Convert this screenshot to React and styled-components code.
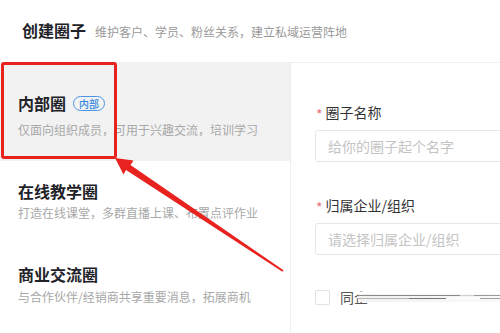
import React from "react";
import styled, { createGlobalStyle } from "styled-components";

const Global = createGlobalStyle`
  html, body { margin: 0; padding: 0; background: #fff; }
  body { font-family: "Noto Sans CJK SC", "Noto Sans", sans-serif; }
  #root { width: 500px; height: 333px; overflow: hidden; }
`;

const Page = styled.div`
  position: relative;
  width: 500px;
  height: 333px;
  overflow: hidden;
  background: #fff;
  display: flex;
  flex-direction: column;
`;

const Header = styled.div`
  height: 62px;
  display: flex;
  align-items: center;
  padding-left: 22px;
  gap: 9px;
  box-sizing: border-box;
  padding-bottom: 2px;
`;

const Title = styled.div`
  font-size: 16px;
  font-weight: 700;
  color: #1f2329;
`;

const Sub = styled.div`
  font-size: 12px;
  color: #9a9a9a;
  padding-top: 2px;
`;

const Body = styled.div`
  flex: 1;
  display: flex;
  border-top: 1px solid #f0f0f0;
`;

const Side = styled.div`
  width: 290px;
  flex-shrink: 0;
  border-right: 1px solid #eeeeee;
  display: flex;
  flex-direction: column;
`;

const Item = styled.div`
  height: ${(p) => p.$h}px;
  box-sizing: border-box;
  padding: ${(p) => p.$pt}px 0 0 18px;
  background: ${(p) => (p.$active ? "#f2f2f2" : "#fff")};
  display: flex;
  flex-direction: column;
  gap: ${(p) => p.$gap}px;
`;

const ItemTitle = styled.div`
  display: flex;
  align-items: center;
  gap: 7px;
  font-size: 16px;
  font-weight: 700;
  color: #1f2329;
  line-height: 20px;
`;

const Badge = styled.span`
  font-size: 10px;
  font-weight: 500;
  color: #2f86e0;
  border: 1px solid #4a95e6;
  border-radius: 8px;
  padding: 0 5px;
  line-height: 13px;
  height: 13px;
`;

const Desc = styled.div`
  font-size: 12px;
  color: #a8a8a8;
  line-height: 16px;
`;

const Main = styled.div`
  flex: 1;
  padding: 39px 0 0 24px;
  display: flex;
  flex-direction: column;
`;

const Label = styled.div`
  font-size: 14px;
  color: #333;
  line-height: 20px;
  display: flex;
  align-items: center;
  gap: 3px;
  margin-left: 1px;
`;

const Star = styled.span`
  color: #e6717d;
  font-size: 14px;
  line-height: 12px;
  padding-top: 4px;
`;

const Input = styled.div`
  margin-top: 8px;
  width: 240px;
  height: 32px;
  box-sizing: border-box;
  border: 1px solid #e6e6e6;
  border-radius: 3px;
  padding-left: 12px;
  display: flex;
  align-items: center;
  font-size: 14px;
  color: #c4c4c4;
  margin-bottom: ${(p) => p.$mb}px;
`;

const CheckRow = styled.div`
  display: flex;
  align-items: center;
  gap: 10px;
`;

const Box = styled.div`
  width: 15px;
  height: 15px;
  box-sizing: border-box;
  border: 1px solid #e2e2e2;
  border-radius: 2px;
`;

const CheckText = styled.span`
  font-size: 14px;
  color: #555;
  line-height: 20px;
`;

const Smudge = styled.span`
  display: block;
  margin-left: -20px;
  width: 170px;
  height: 10px;
  background:
    linear-gradient(#fff, #fff) 0 0 / 100% 2px no-repeat,
    linear-gradient(90deg, #8a8a8a 0 60%, #d0d0d0 60% 68%, #9a9a9a 68% 100%) 0 3px / 100% 1px no-repeat,
    linear-gradient(90deg, #b5b5b5 0 30%, #777 30% 52%, #fff 52% 72%, #a0a0a0 72% 100%) 0 6px / 100% 1px no-repeat,
    linear-gradient(90deg, #f2f2f2, #fafafa) 0 0 / 100% 100% no-repeat;
`;

const Frame = styled.div`
  position: absolute;
  left: 1px;
  top: 62px;
  width: 116px;
  height: 97px;
  box-sizing: border-box;
  border: 3px solid #e8231f;
  border-radius: 3px;
  pointer-events: none;
`;

const ArrowSvg = styled.svg`
  position: absolute;
  left: 0;
  top: 0;
  pointer-events: none;
`;

const items = [
  { title: "内部圈", badge: "内部", desc: "仅面向组织成员，可用于兴趣交流，培训学习", active: true, h: 98, pt: 30, gap: 9 },
  { title: "在线教学圈", desc: "打造在线课堂，多群直播上课、布置点评作业", h: 83, pt: 20, gap: 4 },
  { title: "商业交流圈", desc: "与合作伙伴/经销商共享重要消息，拓展商机", h: 83, pt: 20, gap: 5 },
];

export default function App() {
  return (
    <>
      <Global />
      <Page>
        <Header>
          <Title>创建圈子</Title>
          <Sub>维护客户、学员、粉丝关系，建立私域运营阵地</Sub>
        </Header>
        <Body>
          <Side>
            {items.map((it) => (
              <Item key={it.title} $active={it.active} $h={it.h} $pt={it.pt} $gap={it.gap}>
                <ItemTitle>
                  {it.title}
                  {it.badge && <Badge>{it.badge}</Badge>}
                </ItemTitle>
                <Desc>{it.desc}</Desc>
              </Item>
            ))}
          </Side>
          <Main>
            <Label>
              <Star>*</Star>圈子名称
            </Label>
            <Input $mb={33}>给你的圈子起个名字</Input>
            <Label>
              <Star>*</Star>归属企业/组织
            </Label>
            <Input $mb={32}>请选择归属企业/组织</Input>
            <CheckRow>
              <Box />
              <CheckText>同企</CheckText>
              <Smudge />
            </CheckRow>
          </Main>
        </Body>
        <Frame />
        <ArrowSvg width="500" height="333" viewBox="0 0 500 333">
          <polygon
            fill="#e8231f"
            points="115,158 133.5,160.5 130.5,165 283.5,270.3 282.5,271.7 126,170 123.5,174.5"
          />
        </ArrowSvg>
      </Page>
    </>
  );
}
